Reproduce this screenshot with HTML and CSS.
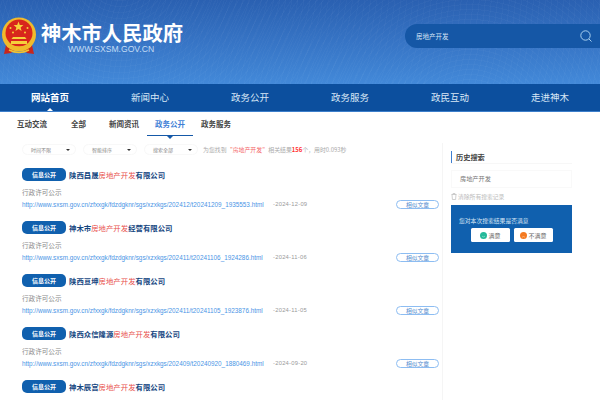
FILE: index.html
```html
<!DOCTYPE html>
<html lang="zh-CN">
<head>
<meta charset="utf-8">
<title>神木市人民政府</title>
<link rel="stylesheet" href="styles.css">
</head>
<body>
<header class="banner">
  <div class="brand">
    <svg class="emblem" width="36" height="38" viewBox="0 0 36 38">
      <path d="M5 28 L3 37 L10 36 L13 33 L23 33 L26 36 L33 37 L31 28 Z" fill="#c8261c"/>
      <path d="M8 33 Q18 38 28 33" fill="none" stroke="#f2c230" stroke-width="1.600"/>
      <circle cx="18" cy="17.500" r="17" fill="#f0bb2c"/>
      <circle cx="18" cy="16" r="13.500" fill="#d8261c"/>
      <path d="M17.500 4.500 l1.300 3.500 3.600.1-2.800 2.300 1 3.500-3.100-2-3.100 2 1-3.500-2.800-2.300 3.600-.1z" fill="#f6d13c"/>
      <circle cx="9.500" cy="11" r="1" fill="#f6d13c"/><circle cx="12" cy="15.500" r="1" fill="#f6d13c"/>
      <circle cx="24" cy="15.500" r="1" fill="#f6d13c"/><circle cx="26.500" cy="11" r="1" fill="#f6d13c"/>
      <path d="M12 20 h12 l1.500 2 h-15z M10 24 h16 v3 h-16z" fill="#f6d13c"/>
      <path d="M6 26 Q18 33 30 26 L30 30 Q18 35 6 30Z" fill="#f0bb2c"/>
    </svg>
    <div class="brand-text">
      <div class="site-name">神木市人民政府</div>
      <div class="site-url">WWW.SXSM.GOV.CN</div>
    </div>
  </div>
  <div class="search">
    <span class="search-text">房地产开发</span>
    <svg width="12" height="13" viewBox="0 0 12 13"><circle cx="5.500" cy="5.500" r="4.700" fill="none" stroke="#a9d0f0" stroke-width="1"/><path d="M9 9 L11.500 11.500" stroke="#a9d0f0" stroke-width="1"/></svg>
  </div>
</header>
<nav class="mainnav">
  <a class="on">网站首页</a><a>新闻中心</a><a>政务公开</a><a>政务服务</a><a>政民互动</a><a>走进神木</a>
</nav>
<div class="content">
  <main class="results">
    <div class="tabs">
      <a>互动交流</a><a>全部</a><a>新闻资讯</a><a class="active">政务公开</a><a>政务服务</a>
    </div>
    <div class="filters">
      <span class="pill">时间不限<i></i></span>
      <span class="pill">智能排序<i></i></span>
      <span class="pill">搜索全部<i></i></span>
      <span class="stat">为您找到 <em>"房地产开发"</em> 相关结果<b>156</b>个，用时0.093秒</span>
    </div>
    <article class="item">
      <h3><span class="tag">信息公开</span>陕西昌晟<em>房地产开发</em>有限公司</h3>
      <p class="sub">行政许可公示</p>
      <div class="meta"><a class="url">http://www.sxsm.gov.cn/zfxxgk/fdzdgknr/sgs/xzxkgs/202412/t20241209_1935553.html</a><span class="date">-2024-12-09</span><span class="similar">相似文章</span></div>
    </article>
    <article class="item">
      <h3><span class="tag">信息公开</span>神木市<em>房地产开发</em>经营有限公司</h3>
      <p class="sub">行政许可公示</p>
      <div class="meta"><a class="url">http://www.sxsm.gov.cn/zfxxgk/fdzdgknr/sgs/xzxkgs/202411/t20241106_1924286.html</a><span class="date">-2024-11-06</span><span class="similar">相似文章</span></div>
    </article>
    <article class="item">
      <h3><span class="tag">信息公开</span>陕西亘坤<em>房地产开发</em>有限公司</h3>
      <p class="sub">行政许可公示</p>
      <div class="meta"><a class="url">http://www.sxsm.gov.cn/zfxxgk/fdzdgknr/sgs/xzxkgs/202411/t20241105_1923876.html</a><span class="date">-2024-11-05</span><span class="similar">相似文章</span></div>
    </article>
    <article class="item">
      <h3><span class="tag">信息公开</span>陕西众信隆源<em>房地产开发</em>有限公司</h3>
      <p class="sub">行政许可公示</p>
      <div class="meta"><a class="url">http://www.sxsm.gov.cn/zfxxgk/fdzdgknr/sgs/xzxkgs/202409/t20240920_1880469.html</a><span class="date">-2024-09-20</span><span class="similar">相似文章</span></div>
    </article>
    <article class="item last">
      <h3><span class="tag">信息公开</span>神木辰宫<em>房地产开发</em>有限公司</h3>
    </article>
  </main>
  <aside class="side">
    <h4>历史搜索</h4>
    <div class="rule"></div>
    <div class="history">房地产开发</div>
    <div class="clear">
      <svg width="6" height="7" viewBox="0 0 6 7"><path d="M.5 1.500h5M1 1.500l.4 5h3.200l.4-5M2 1.500V.5h2v1" fill="none" stroke="#bbb" stroke-width=".7"/></svg>
      清除所有搜索记录
    </div>
    <div class="survey">
      <p>您对本次搜索结果是否满意</p>
      <div class="choices">
        <span class="choice"><svg width="7" height="7" viewBox="0 0 7 7"><circle cx="3.500" cy="3.500" r="3.500" fill="#25b99a"/><path d="M2 4.200 Q3.500 5.600 5 4.200" fill="none" stroke="#bff0e2" stroke-width=".5"/></svg>满意</span>
        <span class="choice"><svg width="7" height="7" viewBox="0 0 7 7"><circle cx="3.500" cy="3.500" r="3.500" fill="#f47a22"/><path d="M2 5.200 Q3.500 3.800 5 5.200" fill="none" stroke="#ffd9b8" stroke-width=".5"/></svg>不满意</span>
      </div>
    </div>
  </aside>
</div>
</body>
</html>
```
FILE: styles.css
```css
* { box-sizing: border-box; }
html, body { margin: 0; height: 400px; overflow: hidden; background: #fff; }
body { font-family: "Liberation Sans", "Noto Sans CJK SC", sans-serif; color: #333; }
a { color: inherit; text-decoration: none; }
i, em { font-style: normal; }

.banner {
  height: 84px;
  display: flex;
  justify-content: space-between;
  padding: 17px 0 0 1px;
  background:
    repeating-radial-gradient(circle at 470px 130px, rgba(255,255,255,.025) 0 1px, rgba(255,255,255,0) 1px 5px),
    repeating-radial-gradient(circle at 120px -30px, rgba(255,255,255,.025) 0 1px, rgba(255,255,255,0) 1px 6px),
    linear-gradient(#2a60b1, #4389d9);
}
.brand { display: flex; align-items: flex-start; }
.emblem { flex: none; }
.brand-text { margin: 4px 0 0 4px; }
.site-name { font: 700 20.300px/22px "Noto Sans CJK SC", sans-serif; color: #fff; }
.site-url { margin: 1px 0 0 27px; font-size: 8.600px; line-height: 11px; color: #c3dcf5; }
.search {
  width: 195px; height: 24px; margin-top: 7px;
  display: flex; align-items: center; justify-content: space-between;
  padding: 0 8px 0 11px;
  background: #1557a6;
  border-radius: 12px 0 0 12px;
}
.search-text { font: 6.500px "Noto Sans CJK SC", sans-serif; color: #d7e6f6; }

.mainnav {
  height: 28px;
  display: grid;
  grid-template-columns: repeat(6, 100px);
  background: #0c4f9e;
  border-bottom: 1px solid #3d7fcb;
}
.mainnav a {
  position: relative;
  text-align: center;
  font: 9.500px/27px "Noto Sans CJK SC", sans-serif;
  color: #d9e7f6;
}
.mainnav a.on { font-weight: 700; color: #fff; }
.mainnav a.on::after {
  content: ""; position: absolute; left: 47px; bottom: 0;
  border: 3px solid transparent; border-top: 0; border-bottom-color: #fff;
}

.content { display: flex; }
.results { width: 442px; flex: none; padding-left: 22px; }

.tabs { height: 26px; display: flex; margin-left: -5px; padding-top: 5px; }
.tabs a { margin-right: 24px; font: 700 7.500px/14px "Noto Sans CJK SC", sans-serif; color: #444; position: relative; }
.tabs a:nth-child(2) { margin-right: 23px; }
.tabs a:nth-child(3), .tabs a:nth-child(4) { margin-right: 16px; }
.tabs a.active { color: #3f7fd6; }
.tabs a.active::after {
  content: ""; position: absolute; left: -8px; right: -8px; top: 18px; height: 1px;
  background: #1559a8;
}
.tabs a.active::before {
  content: ""; position: absolute; left: 12px; top: 19px;
  border: 3px solid transparent; border-bottom: 0; border-top-color: #1559a8;
}

.filters { height: 21px; display: flex; align-items: center; gap: 7px; margin-top: 1px; margin-bottom: 8px; }
.pill {
  width: 54px; height: 11px; flex: none;
  display: flex; align-items: center; justify-content: space-between;
  padding: 0 5px 0 8px;
  border: 1px solid #f8f8f8; border-radius: 6px;
  font: 5px "Noto Sans CJK SC", sans-serif; color: #888;
}
.pill i { border: 2px solid transparent; border-bottom: 0; border-top: 2.500px solid #333; }
.stat { margin-left: -2px; font: 5.900px "Noto Sans CJK SC", sans-serif; color: #aaa; white-space: nowrap; }
.stat em { color: #f46a6a; margin: 0 2px; }
.stat b { color: #f33; }

.item { height: 53px; }
.item.last { height: auto; }
.item h3 {
  margin: 0; display: flex; align-items: center;
  font: 700 7.400px/13px "Noto Sans CJK SC", sans-serif; color: #15467f;
}
.item h3 em { color: #e8504c; font-weight: 400; }
.tag {
  width: 44px; height: 13px; margin-right: 3px; flex: none;
  background: #1060ae; border-radius: 5px;
  text-align: center; color: #fff; font: 700 6px/13px "Noto Sans CJK SC", sans-serif;
}
.sub { margin: 6px 0 0; font: 6.600px/10px "Noto Sans CJK SC", sans-serif; color: #888; }
.meta { display: flex; align-items: center; height: 10px; margin-top: 2px; }
.url { width: 251px; flex: none; font-size: 6.370px; color: #4a95e6; white-space: nowrap; }
.date { width: 123px; flex: none; font-size: 5.800px; letter-spacing: .25px; color: #999; }
.similar {
  width: 43px; height: 9px; flex: none;
  border: 1px solid #8dbdf2; border-radius: 5px;
  text-align: center; font: 5.800px/7px "Noto Sans CJK SC", sans-serif; color: #5a8fd0;
}

.side {
  width: 131px; height: 257px; margin-top: 31px; flex: none;
  padding: 0 0 0 8px;
  border-left: 1px solid #f5f5f5;
}
.side h4 {
  margin: 8px 0 0; height: 12px; padding-left: 4px;
  border-left: 1.500px solid #3f7fd0;
  font: 700 7.200px/12px "Noto Sans CJK SC", sans-serif; color: #444;
}
.rule { width: 121px; height: 1px; background: #f7f7f7; }
.history {
  margin-top: 6px; padding-left: 8px; width: 121px; height: 18px;
  border: 1px solid #f9f9f9;
  font: 6.200px/16px "Noto Sans CJK SC", sans-serif; color: #777;
}
.clear { margin-top: 4px; display: flex; align-items: center; gap: 1px; font: 5.800px/9px "Noto Sans CJK SC", sans-serif; color: #bbb; }
.survey { width: 121px; height: 48px; margin-top: 4px; padding: 11px 0 0 8px; background: #1060ae; }
.survey p { margin: 0; font: 5.800px/10px "Noto Sans CJK SC", sans-serif; color: #d8e6f5; }
.choices { display: flex; gap: 4px; margin: 2px 0 0 12px; }
.choice {
  width: 39px; height: 14px;
  display: flex; align-items: center; justify-content: center; gap: 1px;
  background: #fff; border-radius: 1.500px;
  font: 6px "Noto Sans CJK SC", sans-serif; color: #666;
}
```
